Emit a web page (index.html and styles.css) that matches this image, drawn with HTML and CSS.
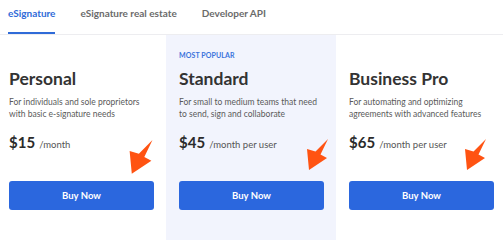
FILE: index.html
```html
<!DOCTYPE html>
<html>
<head>
<meta charset="utf-8">
<link rel="stylesheet" href="styles.css">
</head>
<body>
<nav class="tabs">
  <a class="tab active">eSignature</a>
  <a class="tab">eSignature real estate</a>
  <a class="tab">Developer API</a>
</nav>
<div class="plans">
  <div class="plan plan-first">
    <div class="badge"></div>
    <h2 class="name">Personal</h2>
    <p class="desc">For individuals and sole proprietors<br>with basic e-signature needs</p>
    <p class="price"><span class="amount">$15</span> <span class="per">/month</span></p>
    <button class="buy">Buy Now</button>
    <svg class="arrow arrow-1" viewBox="0 0 24 34"><polygon points="23,1 15.5,16.5 22,20 4,32 2,11 10.5,13.5"/></svg>
  </div>
  <div class="plan plan-popular">
    <div class="badge">MOST POPULAR</div>
    <h2 class="name">Standard</h2>
    <p class="desc">For small to medium teams that need<br>to send, sign and collaborate</p>
    <p class="price"><span class="amount">$45</span> <span class="per">/month per user</span></p>
    <button class="buy">Buy Now</button>
    <svg class="arrow arrow-2" viewBox="0 0 24 34"><polygon points="23,1 15.5,16.5 22,20 4,32 2,11 10.5,13.5"/></svg>
  </div>
  <div class="plan plan-last">
    <div class="badge"></div>
    <h2 class="name">Business Pro</h2>
    <p class="desc">For automating and optimizing<br>agreements with advanced features</p>
    <p class="price"><span class="amount">$65</span> <span class="per">/month per user</span></p>
    <button class="buy">Buy Now</button>
    <svg class="arrow arrow-3" viewBox="0 0 24 34"><polygon points="23,1 15.5,16.5 22,20 4,32 2,11 10.5,13.5"/></svg>
  </div>
</div>
</body>
</html>
```
FILE: styles.css
```css
* { box-sizing: border-box; }
html, body {
  margin: 0;
  padding: 0;
  height: 100%;
  background: #fff;
  font-family: Lato, "Liberation Sans", sans-serif;
  color: #2b2b2b;
  overflow: hidden;
}
body {
  display: flex;
  flex-direction: column;
}
.tabs {
  display: flex;
  flex: none;
  gap: 25px;
  padding-left: 8px;
  height: 35px;
  border-bottom: 1px solid #ededf0;
}
.tab {
  display: block;
  font-size: 10px;
  font-weight: 700;
  line-height: 12px;
  padding-top: 7px;
  height: 34px;
  color: #6b6b6b;
  border-bottom: 2px solid transparent;
}
.tab.active {
  color: #2f6bd8;
  border-bottom-color: #2f6bd8;
}
.plans {
  display: grid;
  flex: 1;
  grid-template-columns: 166px 170px 167px;
}
.plan {
  position: relative;
  padding: 15px 0 0 13px;
}
.plan-first { padding-left: 9px; }
.plan-popular { background: #f2f4fd; }
.badge {
  height: 10px;
  font-size: 7px;
  line-height: 10px;
  font-weight: 700;
  color: #3a73dc;
  letter-spacing: 0.1px;
}
.name {
  margin: 8px 0 0;
  font-size: 17.5px;
  line-height: 22px;
  font-weight: 700;
  color: #333;
}
.desc {
  margin: 5.5px 0 0;
  font-size: 8.5px;
  line-height: 12.5px;
  color: #5a5a5a;
}
.price {
  margin: 12px 0 0;
  line-height: 18px;
}
.amount {
  font-size: 15px;
  font-weight: 700;
  color: #2b2b2b;
}
.per {
  font-size: 9.5px;
  color: #555;
}
.buy {
  display: block;
  margin-top: 27px;
  width: 145px;
  height: 29px;
  border: 0;
  border-radius: 3px;
  background: #2b67de;
  color: #fff;
  font-family: Lato, "Liberation Sans", sans-serif;
  font-size: 9.5px;
  font-weight: 700;
}
.arrow {
  position: absolute;
  width: 24px;
  height: 34px;
  fill: #ff5312;
}
.arrow-1 { left: 127px; top: 104px; width: 27px; height: 37px; }
.arrow-2 { left: 139px; top: 103px; }
.arrow-3 { left: 127px; top: 103px; }
```
